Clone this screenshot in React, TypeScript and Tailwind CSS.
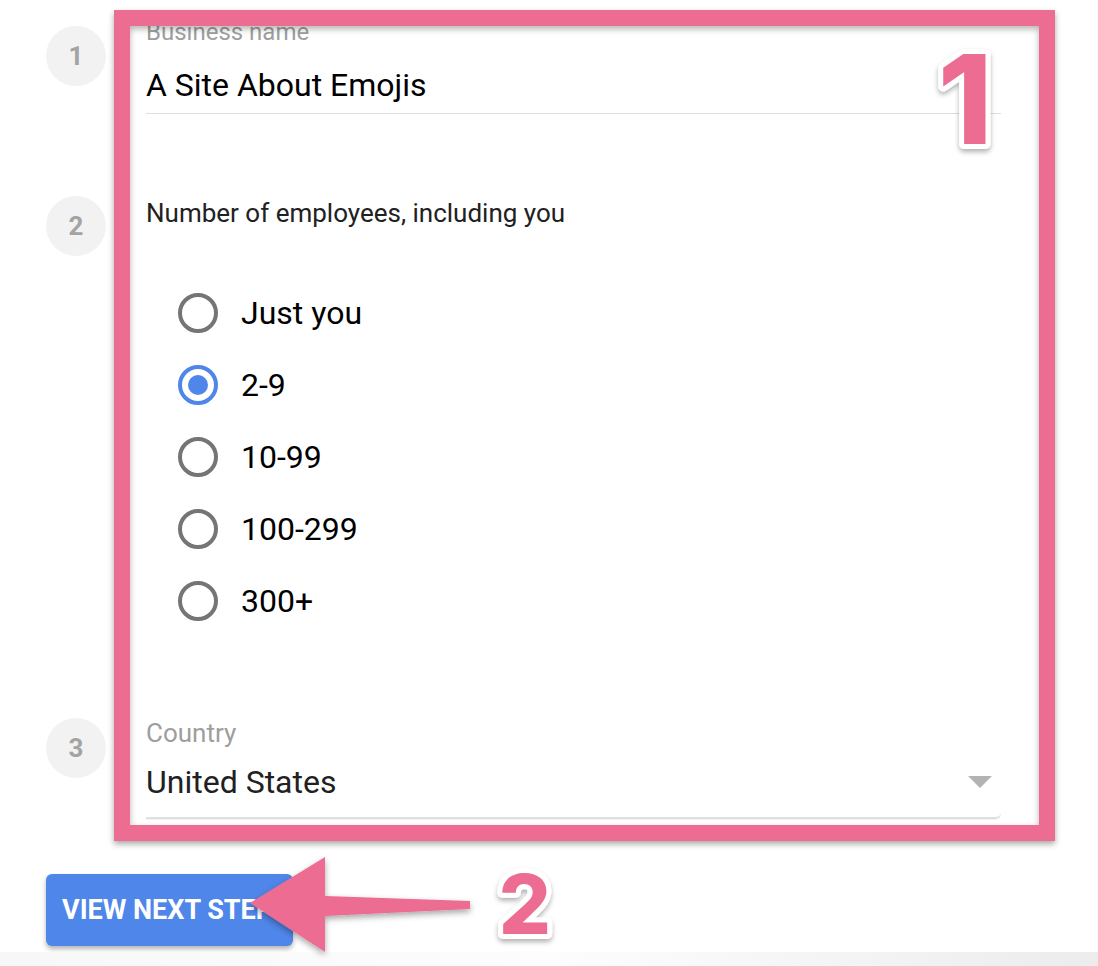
import React from 'react'

const options = ['Just you', '2-9', '10-99', '100-299', '300+']

const StepCircle = ({ n, className = '' }: { n: number; className?: string }) => (
  <div
    className={`flex h-[60px] w-[60px] shrink-0 items-center justify-center rounded-full bg-[#f2f2f2] text-[26px] font-bold text-[#a3a3a3] ${className}`}
  >
    {n}
  </div>
)

const Radio = ({ label, checked }: { label: string; checked?: boolean }) => (
  <div className="flex h-[72px] items-center">
    <div
      className={`ml-[32px] flex h-[40px] w-[40px] items-center justify-center rounded-full border-[4px] ${
        checked ? 'border-[#4f86e9]' : 'border-[#757575]'
      }`}
    >
      {checked && <div className="h-[20px] w-[20px] rounded-full bg-[#4f86e9]" />}
    </div>
    <span className="ml-[23px] text-[32px] leading-[40px] text-black">{label}</span>
  </div>
)

const BigNumber = ({ value, size, w, h }: { value: string; size: number; w: number; h: number }) => (
  <svg width={w} height={h} viewBox={`0 0 ${w} ${h}`} className="overflow-visible">
    <defs>
      <filter id={`sh${value}`} x="-30%" y="-30%" width="160%" height="160%">
        <feDropShadow dx="0" dy="3" stdDeviation="2.5" floodColor="#000" floodOpacity="0.3" />
      </filter>
    </defs>
    <text
      x={w / 2}
      y={h - 6}
      textAnchor="middle"
      fontFamily="Inter, 'Liberation Sans', sans-serif"
      fontWeight={800}
      fontSize={size}
      fill="#ec6c92"
      stroke="#fff"
      strokeWidth={10}
      strokeLinejoin="round"
      paintOrder="stroke"
      filter={`url(#sh${value})`}
    >
      {value}
    </text>
  </svg>
)

export default function App() {
  return (
    <div className="relative h-[966px] w-[1098px] overflow-hidden bg-white font-['Roboto',sans-serif]">
      <div className="pl-[46px] pt-[20px]">
        {/* step 1 */}
        <div className="flex items-start">
          <StepCircle n={1} className="mt-[6px]" />
          <div className="ml-[40px] w-[855px]">
            <div className="text-[24px] leading-[24px] text-[#9e9e9e]">Business name</div>
            <div className="mt-[21px] border-b border-[#dedede] pb-[8px] text-[32px] leading-[40px] text-black">
              A Site About Emojis
            </div>
          </div>
        </div>

        {/* step 2 */}
        <div className="mt-[82px] flex items-start">
          <StepCircle n={2} />
          <div className="ml-[40px] w-[855px]">
            <div className="mt-[1px] text-[26px] leading-[32px] text-[#212121]">
              Number of employees, including you
            </div>
            <div className="mt-[48px] flex flex-col">
              {options.map((o) => (
                <Radio key={o} label={o} checked={o === '2-9'} />
              ))}
            </div>
          </div>
        </div>

        {/* step 3 */}
        <div className="mt-[81px] flex items-start">
          <StepCircle n={3} />
          <div className="ml-[40px] w-[855px]">
            <div className="text-[26px] leading-[30px] text-[#9e9e9e]">Country</div>
            <div className="mt-[14px] flex items-center justify-between rounded-br-[6px] border-b-2 border-[#e0e0e0] pb-[15px] pr-[9px] shadow-[0_1px_1px_rgba(0,0,0,0.06)]">
              <span className="text-[32px] leading-[40px] text-[#212121]">United States</span>
              <span className="h-0 w-0 border-x-[12px] border-t-[12px] border-x-transparent border-t-[#b3b3b3]" />
            </div>
          </div>
        </div>

        <button className="mt-[55px] flex h-[72px] w-[247px] items-center overflow-hidden whitespace-nowrap rounded-[6px] bg-[#4f86e9] px-[16px] text-[27px] font-bold text-white shadow-[0_3px_5px_rgba(0,0,0,0.3)]">
          VIEW NEXT STEP
        </button>
      </div>

      <div className="mt-[6px] h-[14px] bg-gradient-to-r from-[#f7f7f7] via-[#fdfdfd] to-[#ececec]" />

      {/* annotation frame */}
      <div className="pointer-events-none absolute left-[114px] top-[10px] h-[831px] w-[941px] border-[16px] border-[#ec6c92] shadow-[0_3px_6px_rgba(0,0,0,0.35),inset_0_3px_6px_rgba(0,0,0,0.3)]" />

      {/* annotation arrow */}
      <svg className="pointer-events-none absolute left-0 top-0" width="1098" height="966">
        <defs>
          <filter id="arrowShadow" x="-20%" y="-20%" width="140%" height="140%">
            <feDropShadow dx="0" dy="3" stdDeviation="3" floodColor="#000" floodOpacity="0.35" />
          </filter>
        </defs>
        <polygon
          points="250,903 325,857 325,896 470,901 470,909 325,916 325,952"
          fill="#ec6c92"
          filter="url(#arrowShadow)"
        />
      </svg>

      <div className="pointer-events-none absolute left-[928px] top-[40px]">
        <BigNumber value="1" size={124} w={74} h={110} />
      </div>
      <div className="pointer-events-none absolute left-[490px] top-[860px]">
        <BigNumber value="2" size={82} w={70} h={80} />
      </div>
    </div>
  )
}
